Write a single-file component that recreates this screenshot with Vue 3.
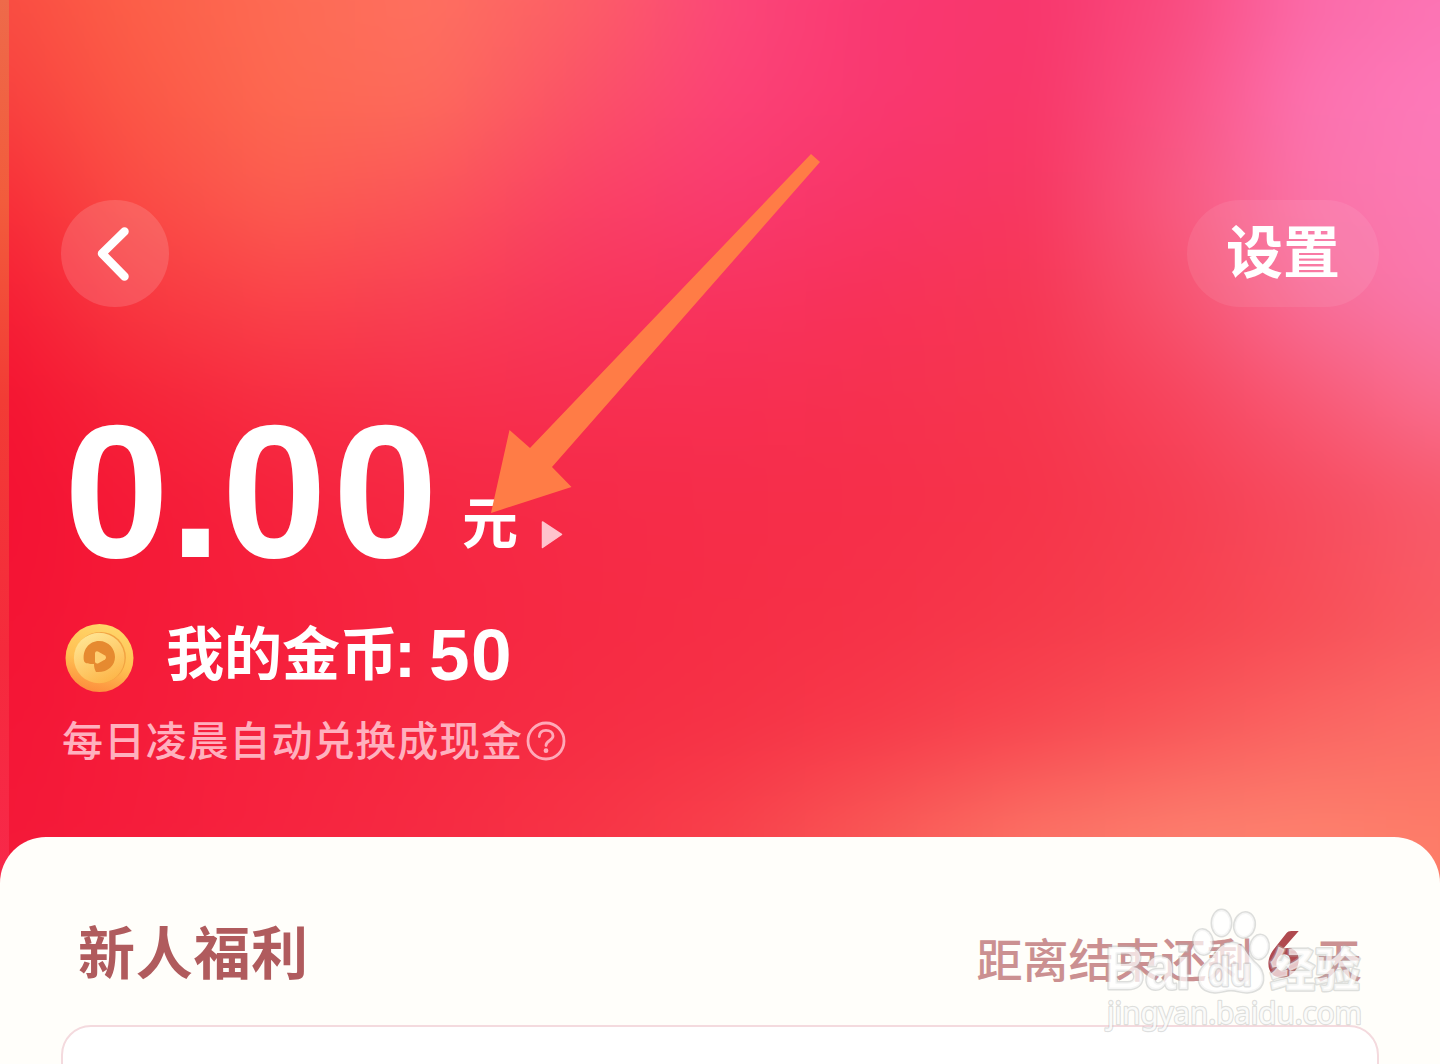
<script setup>
    import { ref, computed } from 'vue'

    // colour mesh of the header, one row for each height
    // the layer hangs over the page by BLEED so that its blur has no pale rim
    const BLEED = 80;
    const xs = [0, 130, 280, 430, 580, 730, 880, 1030, 1180, 1310, 1440];
    const mesh = [
        { y: 0, colors: ['#f94c42', '#fc5f48', '#fd6b54', '#fe7060', '#fc5f66', '#fb4779', '#f93872', '#f8366c', '#f94c80', '#fb6aa8', '#fc74b4'] },
        { y: 100, colors: ['#f8403f', '#fb5746', '#fd6951', '#fd6a5c', '#fb5267', '#fb4276', '#f93870', '#f83768', '#f95486', '#fc72b0', '#fd7aba'] },
        { y: 200, colors: ['#f82e38', '#fa4a45', '#fb5c50', '#fb5559', '#fa4265', '#f93a6f', '#f83566', '#f73760', '#f85c82', '#fa74a8', '#fb7ab4'] },
        { y: 300, colors: ['#f61e35', '#f83840', '#fa444a', '#f94054', '#f8365c', '#f8335f', '#f73258', '#f63754', '#f75570', '#f86e98', '#f978ac'] },
        { y: 400, colors: ['#f41432', '#f62439', '#f72e43', '#f7304c', '#f72f51', '#f72f52', '#f6314f', '#f6364e', '#f7455e', '#f85a76', '#f96e90'] },
        { y: 500, colors: ['#f41233', '#f51a37', '#f6233d', '#f62843', '#f62b48', '#f62d4a', '#f62f4a', '#f6344a', '#f63e52', '#f74b5f', '#f85a6c'] },
        { y: 620, colors: ['#f41434', '#f51a38', '#f6203c', '#f62641', '#f62a44', '#f62e46', '#f63248', '#f6394a', '#f7424f', '#f84e57', '#f95c62'] },
        { y: 720, colors: ['#f41636', '#f51c3a', '#f6223e', '#f62841', '#f62d44', '#f63246', '#f73a4a', '#f84650', '#f95659', '#fa6462', '#fb6e68'] },
        { y: 837, colors: ['#f41838', '#f51d3b', '#f6243f', '#f62b42', '#f73446', '#f8424c', '#f95a57', '#fb7265', '#fc7f6e', '#fd826e', '#fd7c68'] },
    ];

    const rowStyle = (i) => {
        const stops = mesh[i].colors.map((c, n) => `${c} ${xs[n] + BLEED}px`).join(', ');
        const style = { backgroundImage: `linear-gradient(90deg, ${stops})` };
        if (i > 0) {
            style.maskImage = `linear-gradient(180deg, transparent ${mesh[i - 1].y + BLEED}px, #000 ${mesh[i].y + BLEED}px)`;
        }
        return style;
    }

    const balance = ref('0.00')
    const coins = ref(50)
    const daysLeft = ref(6)

    const amountParts = computed(() => balance.value.split('.'))
</script>

<template>
    <div class="page">
        <div class="meshArea">
            <div v-for="(row, i) in mesh" :key="row.y" class="meshRow" :style="rowStyle(i)"></div>
        </div>
        <div class="edge"></div>

        <header class="topBar">
            <button class="backBtn">
                <svg width="108" height="107" viewBox="0 0 108 107">
                    <path d="M63.5 31.5 L41 53.5 L63.5 76.5" fill="none" stroke="#fff" stroke-width="8.5" stroke-linecap="round" stroke-linejoin="round" />
                </svg>
            </button>
            <button class="settingBtn">设置</button>
        </header>

        <section class="wallet">
            <div class="balance">
                <span class="amount">{{ amountParts[0] }}<i class="dot">.</i>{{ amountParts[1] }}</span>
                <span class="unit">元</span>
                <svg class="more" width="22" height="30" viewBox="0 0 22 30">
                    <path d="M1.500 2 L20.500 14.500 L1.500 27.500 Z" fill="#ffc3cd" stroke="#ffc3cd" stroke-width="1.5" stroke-linejoin="round" />
                </svg>
            </div>
            <div class="coinLine">
                <svg class="coin" width="70" height="70" viewBox="0 0 70 70">
                    <defs>
                        <linearGradient id="rim" x1="0.6" y1="0" x2="0.35" y2="1">
                            <stop offset="0" stop-color="#ffd66a" />
                            <stop offset="0.55" stop-color="#ffc052" />
                            <stop offset="1" stop-color="#fd8c3c" />
                        </linearGradient>
                        <linearGradient id="face" x1="0.2" y1="0" x2="0.7" y2="1">
                            <stop offset="0" stop-color="#ffe796" />
                            <stop offset="1" stop-color="#fdb548" />
                        </linearGradient>
                    </defs>
                    <circle cx="34.5" cy="35" r="34" fill="url(#rim)" />
                    <circle cx="35.4" cy="34.4" r="25.5" fill="#f2a342" />
                    <circle cx="34.2" cy="35" r="25.3" fill="url(#face)" />
                    <path d="M19 38 C17 27 24 18 34 18 C44 18 50 26 50 34 C50 43 42 50 31 49 C30 47 29 45 29 41 C25 41 20 41 19 38 Z" fill="#e68a30" />
                    <path d="M30 30 Q30.500 27.500 33 28.500 L40 32.500 Q42 34.500 40 36.500 L33 40.500 Q30 41 30 38.500 Z" fill="#ffcf72" />
                </svg>
                <span class="coinLabel">我的金币</span>
                <span class="colon">:</span>
                <span class="coinNum">{{ coins }}</span>
            </div>
            <div class="hint">
                <span>每日凌晨自动兑换成现金</span>
                <svg width="40" height="40" viewBox="0 0 40 40" fill="none" stroke="#ffa9b8" stroke-width="2.8" stroke-linecap="round">
                    <circle cx="20" cy="20" r="18" />
                    <path d="M13.3 15.5 C13.5 11 16.5 9.3 20 9.3 C24 9.3 27 11.6 27 15 C27 19.5 20 19.5 20 24.5" />
                    <circle cx="20" cy="29.7" r="1.5" fill="#ffa9b8" stroke-width="1.8" />
                </svg>
            </div>
        </section>

        <main class="sheet">
            <div class="sheetHead">
                <h2>新人福利</h2>
                <div class="countdown">
                    <span>距离结束还剩</span>
                    <b>{{ daysLeft }}</b>
                    <span>天</span>
                </div>
            </div>
            <div class="card"></div>
        </main>

        <svg class="arrow" width="330" height="362" viewBox="490 152 330 362">
            <path d="M811 154 L820 162 L552 467 L571.500 487 L491 513 L509.500 430 L530 448 Z" fill="#ff7c46" />
        </svg>

        <svg class="watermark" width="280" height="134" viewBox="1096 900 280 134">
            <g class="markShape">
                <ellipse cx="1221.500" cy="923" rx="9.500" ry="13" />
                <ellipse cx="1244.500" cy="925" rx="10" ry="12.500" transform="rotate(12 1244.500 925)" />
                <ellipse cx="1203" cy="942" rx="9.500" ry="12.500" transform="rotate(-8 1203 942)" />
                <ellipse cx="1259.500" cy="947" rx="9" ry="12" transform="rotate(8 1259.500 947)" />
                <path d="M1232 943 C1245 943 1246 955 1255 963 C1266 972 1267 990 1249 992 C1241 993 1238 990 1231 990 C1224 990 1221 993 1213 992 C1196 990 1195 973 1207 963 C1216 955 1218 943 1232 943 Z" />
            </g>
            <text class="markText bai" x="1105" y="989" textLength="86" lengthAdjust="spacingAndGlyphs">Bai</text>
            <text class="markText du" x="1208" y="986" textLength="44" lengthAdjust="spacingAndGlyphs">du</text>
            <text class="markText jy" x="1270" y="986" textLength="90" lengthAdjust="spacingAndGlyphs">经验</text>
            <text class="markText url" x="1107" y="1024" textLength="255" lengthAdjust="spacingAndGlyphs">jingyan.baidu.com</text>
        </svg>
    </div>
</template>

<style>
body {
    margin: 0;
    overflow: hidden;
}
</style>

<style scoped>
.page {
    position: relative;
    width: 1440px;
    height: 1064px;
    overflow: hidden;
    display: flex;
    flex-direction: column;
    font-family: "Noto Sans CJK SC", sans-serif;
    color: #fff;
}

.meshArea {
    position: absolute;
    top: -80px;
    left: -80px;
    width: 1600px;
    height: 1100px;
    filter: blur(26px);
}

.meshRow {
    position: absolute;
    inset: 0;
}

.edge {
    position: absolute;
    top: 0;
    left: 0;
    width: 9px;
    height: 900px;
    background: linear-gradient(180deg, #ee6a4a 0, #f25c3c 200px, #f23c35 400px, #f52a3c 650px, #f8284a 880px);
}

.topBar {
    position: relative;
    display: flex;
    justify-content: space-between;
    padding: 200px 61px 0;
}

.topBar button {
    height: 107px;
    padding: 0;
    border: none;
    border-radius: 54px;
    color: #fff;
    font-family: inherit;
}

.topBar .backBtn {
    width: 108px;
    background-color: rgba(255, 255, 255, .14);
}

.backBtn svg {
    display: block;
}

.topBar .settingBtn {
    width: 192px;
    padding-bottom: 11px;
    background-color: rgba(255, 255, 255, .08);
    font-size: 57px;
    font-weight: 700;
    line-height: 96px;
}

.wallet {
    position: relative;
    height: 530px;
    padding-left: 62px;
    box-sizing: border-box;
}

.balance {
    display: flex;
    align-items: flex-start;
    height: 290px;
}

.amount {
    width: 398px;
    margin-left: 2px;
    font-family: "Liberation Sans", sans-serif;
    font-size: 189px;
    font-weight: 700;
    line-height: 370px;
    letter-spacing: 6px;
}

.dot {
    margin-left: -6px;
    font-style: normal;
    letter-spacing: 0;
}

.unit {
    width: 78px;
    font-size: 56px;
    font-weight: 700;
    line-height: 423px;
}

.more {
    margin: 213px 0 0 1px;
}

.coinLine {
    display: flex;
    align-items: center;
    height: 122px;
    font-size: 58px;
    font-weight: 700;
    line-height: 100px;
}

.coin {
    margin: 0 31px 0 3px;
}

.coinLabel {
    margin-top: -16px;
}

.colon,
.coinNum {
    font-family: "Liberation Sans", sans-serif;
}

.colon {
    width: 35px;
    margin: -8px 0 0 -4px;
    font-size: 66px;
}

.coinNum {
    margin-top: -6px;
    font-size: 73px;
    letter-spacing: 1.5px;
}

.hint {
    display: flex;
    align-items: center;
    gap: 3px;
    height: 44px;
    color: #ffb0be;
}

.hint span {
    margin-top: -7px;
    font-size: 41px;
    font-weight: 500;
    letter-spacing: .9px;
    line-height: 44px;
}

.sheet {
    position: relative;
    flex: 1;
    border-radius: 46px 46px 0 0;
    background-color: #fffefa;
    overflow: hidden;
}

.sheetHead {
    display: flex;
    justify-content: space-between;
    height: 188px;
    padding: 0 78px;
}

.sheetHead h2 {
    margin: 0;
    font-size: 57px;
    letter-spacing: .7px;
    line-height: 225px;
    color: #b05b5d;
}

.countdown {
    display: flex;
    align-items: baseline;
    font-size: 46px;
    font-weight: 500;
    line-height: 231px;
    color: #cb9091;
}

.countdown b {
    margin: 0 17px 0 13px;
    font-family: Lato, sans-serif;
    font-size: 63px;
    font-style: italic;
    font-weight: 900;
    color: #b04a4f;
}

.card {
    height: 120px;
    margin: 0 61px;
    border: 2px solid #f4dade;
    border-radius: 30px;
    background-color: #fff;
    box-sizing: border-box;
}

.arrow {
    position: absolute;
    left: 490px;
    top: 152px;
}

.watermark {
    position: absolute;
    left: 1096px;
    top: 900px;
}

.markShape,
.markText {
    fill: rgba(255, 255, 255, .7);
    stroke: rgba(175, 178, 178, .42);
    stroke-width: 3;
    stroke-linejoin: round;
    paint-order: stroke;
}

.bai,
.du {
    font-family: "Liberation Sans", sans-serif;
    font-size: 61px;
    font-weight: 700;
}

.du {
    font-size: 40px;
}

.jy {
    font-size: 46px;
    font-weight: 900;
}

.url {
    font-family: "Noto Sans", sans-serif;
    font-size: 31px;
    stroke-width: 2.4;
    fill: rgba(255, 255, 255, .85);
}
</style>
